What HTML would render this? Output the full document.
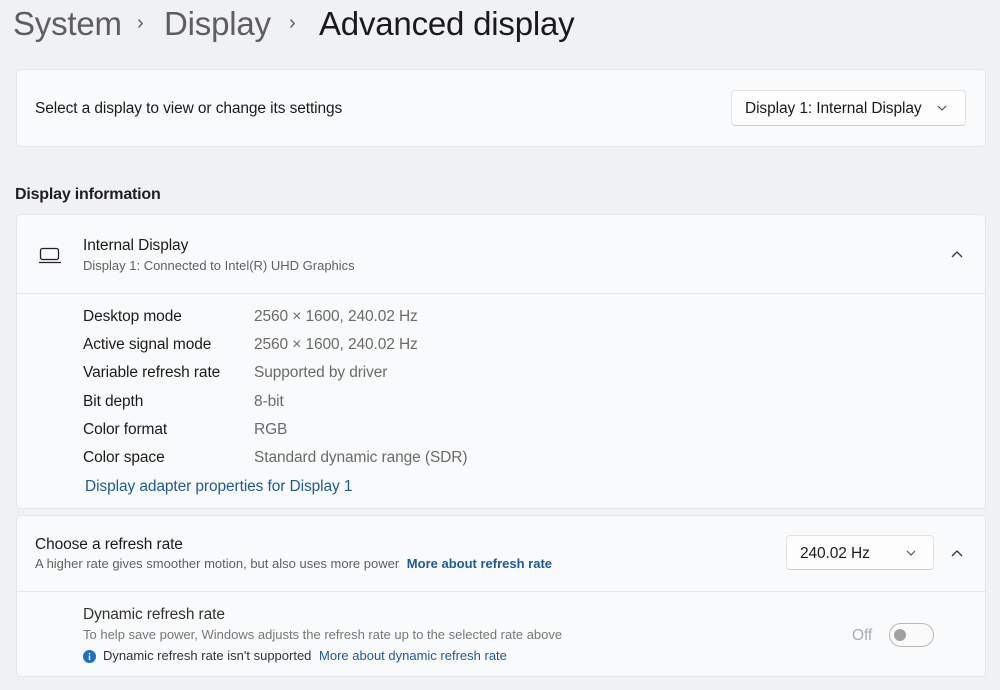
<!DOCTYPE html>
<html><head><style>
*{margin:0;padding:0;box-sizing:border-box}
body{width:1000px;height:690px;background:#eff1f4;font-family:"Liberation Sans",sans-serif;color:#1b1b1b;position:relative;overflow:hidden}
.a{position:absolute;white-space:nowrap}
.card{position:absolute;left:16px;width:970px;background:#f9fafb;border:1px solid #e3e5e8;border-radius:5px}
.t{font-size:15.5px;letter-spacing:-0.1px}
.s{font-size:13px;color:#606060;letter-spacing:0}
.v{color:#6a6a6a}
.link{color:#1d5a97}
.dd{position:absolute;background:#fdfdfd;border:1px solid #e2e2e2;border-bottom-color:#cfcfcf;border-radius:4px}
.div{position:absolute;left:0;right:0;height:1px;background:#e3e5e8}
</style></head><body>
<div class="a" style="left:13px;top:5px;font-size:33px;color:#5e5e5e;letter-spacing:-0.2px">System</div>
<div class="a" style="left:137px;top:12px;font-size:20px;color:#5e5e5e">›</div>
<div class="a" style="left:164px;top:5px;font-size:33px;color:#5e5e5e;letter-spacing:-0.2px">Display</div>
<div class="a" style="left:289px;top:12px;font-size:20px;color:#5e5e5e">›</div>
<div class="a" style="left:319px;top:5px;font-size:33px;color:#1a1a1a;letter-spacing:-0.2px">Advanced display</div>

<div class="card" style="top:69px;height:78px">
  <div class="a t" style="left:18px;top:30px">Select a display to view or change its settings</div>
  <div class="dd" style="left:714px;top:20px;width:235px;height:36px">
    <div class="a t" style="left:13px;top:9px">Display 1: Internal Display</div>
    <svg class="a" style="left:205px;top:14px" width="10" height="7"><path d="M1 1L5 5L9 1" fill="none" stroke="#555" stroke-width="1.2"/></svg>
  </div>
</div>

<div class="a" style="left:15px;top:186px;font-size:16px;font-weight:bold;color:#1f1f1f;letter-spacing:-0.2px">Display information</div>

<div class="card" style="top:214px;height:295px">
  <svg class="a" style="left:21px;top:31px" width="24" height="18"><rect x="2.5" y="2.5" width="18" height="11" rx="2" fill="none" stroke="#222" stroke-width="1.3"/><path d="M1 16.5H23" stroke="#222" stroke-width="1.3"/></svg>
  <div class="a t" style="left:66px;top:22px">Internal Display</div>
  <div class="a s" style="left:66px;top:43px">Display 1: Connected to Intel(R) UHD Graphics</div>
  <svg class="a" style="left:934px;top:35px" width="12" height="8"><path d="M1 7L6 2L11 7" fill="none" stroke="#333" stroke-width="1.3"/></svg>
  <div class="div" style="top:78px"></div>
  <div class="a t" style="left:66px;top:88px;line-height:28.2px">Desktop mode<br>Active signal mode<br>Variable refresh rate<br>Bit depth<br>Color format<br>Color space</div>
  <div class="a t v" style="left:237px;top:88px;line-height:28.2px">2560 × 1600, 240.02 Hz<br>2560 × 1600, 240.02 Hz<br>Supported by driver<br>8-bit<br>RGB<br>Standard dynamic range (SDR)</div>
  <div class="a t link" style="left:68px;top:263px">Display adapter properties for Display 1</div>
</div>

<div class="card" style="top:515px;height:162px">
  <div class="a t" style="left:18px;top:20px">Choose a refresh rate</div>
  <div class="a s" style="left:18px;top:40px">A higher rate gives smoother motion, but also uses more power <span class="link" style="font-weight:bold;margin-left:4px">More about refresh rate</span></div>
  <div class="dd" style="left:769px;top:19px;width:148px;height:35px">
    <div class="a t" style="left:13px;top:9px">240.02 Hz</div>
    <svg class="a" style="left:119px;top:14px" width="10" height="7"><path d="M1 1L5 5L9 1" fill="none" stroke="#555" stroke-width="1.2"/></svg>
  </div>
  <svg class="a" style="left:934px;top:33px" width="12" height="8"><path d="M1 7L6 2L11 7" fill="none" stroke="#333" stroke-width="1.3"/></svg>
  <div class="div" style="top:75px"></div>
  <div class="a t" style="left:66px;top:90px;color:#333">Dynamic refresh rate</div>
  <div class="a s" style="left:66px;top:111px;color:#777">To help save power, Windows adjusts the refresh rate up to the selected rate above</div>
  <svg class="a" style="left:66px;top:134px" width="13" height="13"><circle cx="6.5" cy="6.5" r="6.5" fill="#1f6fc4"/><rect x="5.8" y="5.5" width="1.4" height="4.5" fill="#fff"/><rect x="5.8" y="3" width="1.4" height="1.4" fill="#fff"/></svg>
  <div class="a s" style="left:86px;top:132px;color:#333">Dynamic refresh rate isn't supported <span class="link" style="margin-left:4px">More about dynamic refresh rate</span></div>
  <div class="a t" style="left:835px;top:111px;color:#aaa">Off</div>
  <div class="a" style="left:872px;top:107px;width:45px;height:24px;border:1px solid #b8b8b8;border-radius:12px;background:#fafafa">
    <div class="a" style="left:4px;top:5px;width:12px;height:12px;border-radius:6px;background:#a0a0a0"></div>
  </div>
</div>
</body></html>
